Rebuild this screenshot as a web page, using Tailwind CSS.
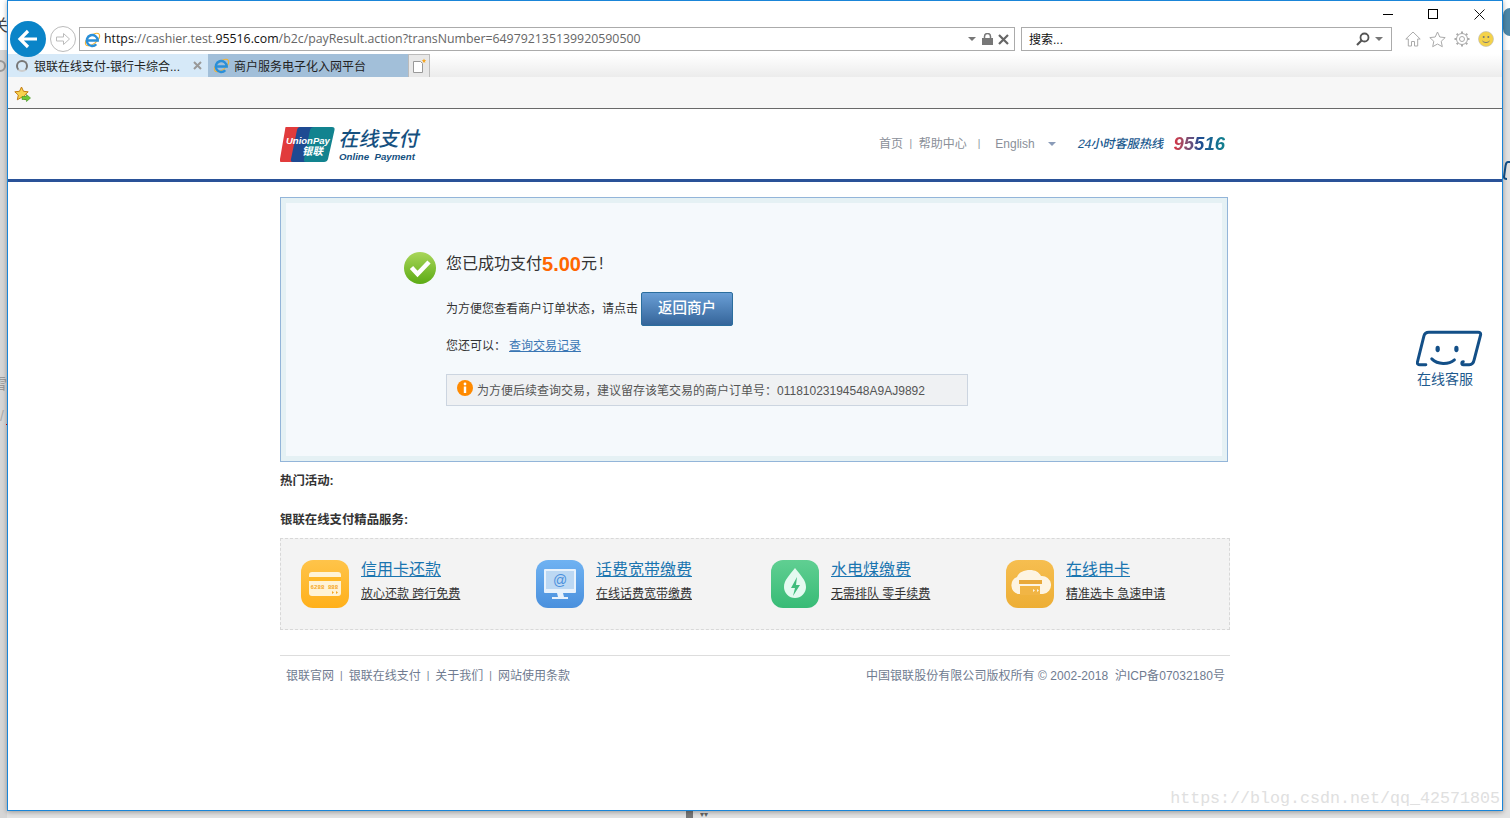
<!DOCTYPE html>
<html lang="zh-CN">
<head>
<meta charset="utf-8">
<title>银联在线支付</title>
<script src="https://cdn.jsdelivr.net/npm/@tailwindcss/browser@4"></script>
</head>
<body class="relative h-[818px] w-[1510px] overflow-hidden bg-[#e2e2e2] font-['Liberation_Sans','Noto_Sans_CJK_SC',sans-serif] text-xs text-[#333]">

<!-- desktop fragments behind the window -->
<div class="absolute left-0 top-0 h-[50px] w-[7px] overflow-hidden bg-white"><span class="absolute left-[-8px] top-[15px] text-[16px] text-[#444]">关</span></div>
<div class="absolute left-0 top-[50px] h-[768px] w-[7px] bg-[#d6d6d6]"></div>
<div class="absolute left-[-6px] top-[60px] size-[12px] rounded-full border-2 border-[#999]"></div>
<div class="absolute left-[-8px] top-[376px] text-[15px] leading-4 text-[#999]">雪</div>
<div class="absolute left-0 top-[408px] text-[14px] leading-4 text-[#aaa]">/</div>
<div class="absolute left-[6px] top-[424px] size-px bg-[#e00000]"></div>
<div class="absolute right-0 top-0 h-[50px] w-[7px] bg-white"></div>
<div class="absolute right-0 top-[8px] h-[28px] w-[7px] rounded-l-full bg-[#4d87a8]"></div>
<svg class="absolute right-0 top-[160px] h-[20px] w-[7px]" viewBox="0 0 7 20" fill="none" stroke="#134f87" stroke-width="2"><path d="M7 2H5C3 2 3 4 2.500 6L1 17c0 1 1 2 3 2"/></svg>
<div class="absolute bottom-0 left-[686px] h-[7px] w-[7px] bg-[#777]"></div>
<div class="absolute bottom-0 left-[700px] h-[6px] w-[15px] overflow-hidden text-[8px] leading-[6px] text-[#666]">▾▾</div>

<!-- browser window -->
<div class="relative ml-[7px] flex h-[811px] w-[1496px] flex-col border border-[#1a85d8] bg-white shadow-[0_1px_5px_rgba(0,0,0,0.35)]">

  <!-- title strip with window buttons -->
  <div class="flex h-[26px] items-center justify-end pr-[17px]">
    <div class="flex items-center">
      <span class="mr-[35px] h-px w-[10px] bg-black"></span>
      <span class="mr-[36px] size-[10px] border border-black"></span>
      <svg class="size-[11px]" viewBox="0 0 11 11" fill="none" stroke="#111" stroke-width="1"><path d="M.5.5l10 10M10.500.5l-10 10"/></svg>
    </div>
  </div>

  <!-- address row -->
  <div class="flex h-[24px] items-stretch pl-[71px]">
    <div class="flex w-[936px] shrink-0 items-center border border-[#ababab] pl-[4px] pr-[5px]">
      <svg class="mr-[3px] size-[17px] shrink-0" viewBox="0 0 18 18" fill="none"><ellipse cx="9" cy="9" rx="9" ry="4.500" transform="rotate(-38 9 9)" stroke="#f2b233" stroke-width="1.200"/><path d="M4 10h10.500A5.800 5.800 0 1 0 13 14" stroke="#2a8fd8" stroke-width="2.600"/></svg>
      <span class="pt-[1px] font-['Open_Sans',sans-serif] text-[12.340px] leading-none text-[#666]"><span class="text-[#111]">https</span>://cashier.test.<span class="text-[#111]">95516.com</span>/b2c/payResult.action?transNumber=649792135139920590500</span>
      <span class="ml-auto mr-[6px] h-0 w-0 border-x-[4px] border-t-[4px] border-x-transparent border-t-[#777]"></span>
      <svg class="mr-[5px] h-[12px] w-[11px]" viewBox="0 0 11 12"><path d="M0 5h11v7H0z" fill="#777"/><path d="M2.500 5.500V3.500a3 3 0 0 1 6 0v2" fill="none" stroke="#777" stroke-width="1.500"/></svg>
      <svg class="size-[11px]" viewBox="0 0 11 11" fill="none" stroke="#666" stroke-width="2.200"><path d="M1 1l9 9M10 1l-9 9"/></svg>
    </div>
    <div class="ml-[6px] flex w-[371px] shrink-0 items-center border border-[#ababab] pl-[7px] pr-[8px]">
      <span class="pt-px text-xs text-[#111]">搜索...</span>
      <svg class="ml-auto mr-[5px] size-[14px]" viewBox="0 0 14 14" fill="none" stroke="#555"><circle cx="8.500" cy="5.500" r="4" stroke-width="1.800"/><path d="M5.500 8.500L1 13" stroke-width="2.200"/></svg>
      <span class="h-0 w-0 border-x-[4px] border-t-[4px] border-x-transparent border-t-[#777]"></span>
    </div>
    <div class="ml-[13px] flex items-center gap-[8px]">
      <svg class="size-[16px]" viewBox="0 0 16 16" fill="#fff" stroke="#aaa"><path d="M8 1L.8 8h2.500v7H6.500v-4.500h3V15h3.200V8h2.500z"/></svg>
      <svg class="size-[17px]" viewBox="0 0 17 17" fill="#fff" stroke="#aaa"><path d="M8.500 1l2.300 5 5.400.6-4 3.700 1.100 5.400-4.800-2.700-4.800 2.700 1.100-5.400-4-3.700 5.400-.6z"/></svg>
      <svg class="size-[16px]" viewBox="0 0 16 16" fill="none" stroke="#aaa"><circle cx="8" cy="8" r="2.500"/><circle cx="8" cy="8" r="5.500"/><path d="M8 .500v2M8 13.500v2M.5 8h2M13.500 8h2M2.700 2.700l1.400 1.400M11.900 11.900l1.400 1.400M13.300 2.700l-1.400 1.400M4.100 11.900l-1.400 1.400" stroke-width="2"/></svg>
      <svg class="size-[16px]" viewBox="0 0 16 16"><circle cx="8" cy="8" r="7.500" fill="#f4d24a" stroke="#bbb" stroke-width=".6"/><circle cx="5.700" cy="6" r="1" fill="#777"/><circle cx="10.300" cy="6" r="1" fill="#777"/><path d="M4.500 10c2 2 5 2 7 0" fill="none" stroke="#777"/></svg>
    </div>
  </div>

  <!-- tab row -->
  <div class="mt-[3px] flex h-[23px] items-stretch bg-gradient-to-b from-white to-[#ececec]">
    <div class="flex w-[200px] items-center bg-[#d6e9f8] pl-[8px] pr-[6px]">
      <span class="mr-[6px] size-[12px] rounded-full border-2 border-[#777] border-b-[#ccc]"></span>
      <span class="pt-[2px] text-xs text-[#222]">银联在线支付-银行卡综合...</span>
      <svg class="ml-auto size-[9px]" viewBox="0 0 9 9" fill="none" stroke="#999" stroke-width="2"><path d="M1 1l7 7M8 1l-7 7"/></svg>
    </div>
    <div class="flex w-[200px] items-center bg-[#a2bfd9] pl-[5px]">
      <svg class="mr-[4px] size-[17px] shrink-0" viewBox="0 0 18 18" fill="none"><ellipse cx="9" cy="9" rx="9" ry="4.500" transform="rotate(-38 9 9)" stroke="#f2b233" stroke-width="1.200"/><path d="M4 10h10.500A5.800 5.800 0 1 0 13 14" stroke="#2a8fd8" stroke-width="2.600"/></svg>
      <span class="pt-[2px] text-xs text-[#222]">商户服务电子化入网平台</span>
    </div>
    <div class="flex w-[22px] items-center justify-center border-x border-t border-[#bbb] bg-[#e8e8e8]">
      <svg class="size-[16px]" viewBox="0 0 16 16"><path d="M2.500 3.500h7l2 2v9h-9z" fill="#fff" stroke="#999"/><path d="M13 .500l.7 1.500 1.500.3-1.200 1 .3 1.600-1.300-.8-1.300.8.300-1.600-1.200-1 1.500-.3z" fill="#f5a623"/></svg>
    </div>
  </div>

  <!-- favorites row -->
  <div class="flex h-[32px] items-center border-b border-[#696969] bg-[#f7f7f7] pl-[6px] pt-[3px]">
    <svg class="size-[17px]" viewBox="0 0 17 17"><path d="M7.500 1l2 4.300 4.700.5-3.500 3.300 1 4.700-4.200-2.400-4.200 2.400 1-4.700L.8 5.800l4.700-.5z" fill="#f7d24e" stroke="#c47d12"/><path d="M8 10.500h4.500V8.500l4 3.500-4 3.500v-2H8z" fill="#6cc936" stroke="#3e8e1f" stroke-width=".6"/></svg>
  </div>

  <!-- page -->
  <div class="flex-1">
    <header class="h-[70px]">
      <div class="mx-auto flex h-[70px] w-[950px] items-start justify-between">
        <div class="mt-[18px] flex">
          <svg class="h-[35px] w-[55px] shrink-0" viewBox="0 0 55 35">
            <path d="M6 0h22c2 0 3 1 2.500 3L24 32c-.5 2-2 3-4 3H2c-2 0-2.500-1-2-3L5 3C5.500 1 5 0 6 0z" fill="#e13b3c"/>
            <path d="M20 0h21c2 0 3 1 2.500 3L37 32c-.5 2-2 3-4 3H13c-2 0-2.500-1-2-3l6-29c.5-2 1.500-3 3-3z" fill="#1e4a92"/>
            <path d="M34 0h18c2 0 3 1 2.500 3L48 32c-.5 2-2 3-4 3H26c-2 0-2.500-1-2-3l6-29c.5-2 2-3 4-3z" fill="#12838f"/>
            <text x="6" y="17" font-family="Liberation Sans" font-size="9.500" font-weight="700" font-style="italic" fill="#fff">UnionPay</text>
            <text x="22" y="28" font-family="Noto Sans CJK SC" font-size="10.500" font-weight="700" font-style="italic" fill="#fff">银联</text>
          </svg>
          <div class="ml-[5px] flex flex-col">
            <span class="-skew-x-12 text-[20px] font-medium leading-[24px] text-[#15507f]">在线支付</span>
            <span class="-ml-[1px] mt-[1px] text-[9.700px] font-bold italic leading-[10px] text-[#15507f]">Online&nbsp; Payment</span>
          </div>
        </div>
        <div class="mr-[5px] mt-[23px] flex h-[24px] items-center text-xs text-[#8a8f99]">
          <span>首页</span><span class="mx-[6.500px] text-[10px]">|</span><span>帮助中心</span><span class="ml-[11px] mr-[8px] text-[10px]">|</span>
          <span class="ml-[7px]">English</span>
          <span class="ml-[13px] h-0 w-0 border-x-[4px] border-t-[4px] border-x-transparent border-t-[#8a9bb8]"></span>
          <span class="ml-[22px] -skew-x-12 text-[12.200px] font-medium tracking-[-0.100px] text-[#1b5a8f]">24小时客服热线</span>
          <span class="ml-[10px] bg-gradient-to-r from-[#d92d40] via-[#1e4a92] to-[#12838f] bg-clip-text text-[18.500px] font-bold italic text-transparent">95516</span>
        </div>
      </div>
    </header>
    <div class="h-[3px] bg-[#2a5298]"></div>

    <main class="mx-auto mt-[15px] w-[950px]">
      <!-- result panel -->
      <section class="h-[265px] w-[948px] border border-[#93b5d9] bg-[#e5f1f4] p-[5px]">
        <div class="flex h-full bg-[#f5f9fc] pl-[118px] pt-[48px]">
          <svg class="mt-[1px] size-[32px] shrink-0" viewBox="0 0 32 32">
            <defs><linearGradient id="g1" x1="0" y1="0" x2="0" y2="1"><stop offset="0" stop-color="#a9d65a"/><stop offset="1" stop-color="#5cab14"/></linearGradient></defs>
            <circle cx="16" cy="16" r="16" fill="url(#g1)"/>
            <path d="M7.500 15.500l6 6.500L25 10" fill="none" stroke="#fff" stroke-width="4.500"/>
          </svg>
          <div class="ml-[10px] flex flex-col items-start">
            <div class="flex h-[24px] items-center pt-[2px] text-base text-[#333]">您已成功支付<span class="text-[20px] font-bold text-[#ff6600]">5.00</span>元<span class="ml-[2px]">!</span></div>
            <div class="mt-[17px] flex items-center">
              <span class="text-xs text-[#333]">为方便您查看商户订单状态&#xFF0C;请点击</span>
              <a class="ml-[3px] flex h-[34px] w-[92px] items-center justify-center rounded-[2px] border border-[#2b6e9e] bg-gradient-to-b from-[#6a9fd6] to-[#35659a] text-[14.500px] font-medium text-white">返回商户</a>
            </div>
            <div class="mt-[10px] flex h-[20px] items-center text-xs text-[#333]">您还可以&#xFF1A;<a class="ml-[3px] text-[#3a76b4] underline">查询交易记录</a></div>
            <div class="mt-[18px] flex h-[32px] w-[522px] items-center border border-[#ccd5e0] bg-[#eff1f3] pl-[10px] pt-[1px] text-xs text-[#555]">
              <svg class="mb-[5px] mr-[4px] size-[16px] shrink-0" viewBox="0 0 16 16"><circle cx="8" cy="8" r="8" fill="#ff8a00"/><circle cx="8" cy="4" r="1.400" fill="#fff"/><path d="M6.800 6.500h2.400v6.500H6.800z" fill="#fff"/></svg>
              为方便后续查询交易&#xFF0C;建议留存该笔交易的商户订单号&#xFF1A;01181023194548A9AJ9892
            </div>
          </div>
        </div>
      </section>

      <h3 class="mt-[11px] h-[16px] text-[12.400px] font-bold leading-4 text-[#333]">热门活动:</h3>
      <h3 class="mt-[23px] h-[16px] text-[12.400px] font-bold leading-4 text-[#333]">银联在线支付精品服务:</h3>

      <!-- services -->
      <section class="mt-[10px] flex h-[92px] items-center border border-dashed border-[#d8d8d8] bg-[#f3f3f3] pl-[20px]">
        <a class="flex w-[235px] shrink-0 items-center">
          <svg class="size-[48px] shrink-0" viewBox="0 0 48 48">
            <defs><linearGradient id="y1" x1="0" y1="0" x2="0" y2="1"><stop offset="0" stop-color="#ffc44a"/><stop offset="1" stop-color="#ffb01a"/></linearGradient></defs>
            <rect width="48" height="48" rx="12" fill="url(#y1)"/>
            <rect x="8" y="12" width="32" height="24" rx="3" fill="#fff3d6"/>
            <rect x="8" y="17" width="32" height="4" fill="#ffb827"/>
            <text x="9.500" y="28.500" font-family="Liberation Mono" font-size="5.800" font-weight="700" fill="#f5a623">6288 888</text>
            <path d="M31 31l2 1.500-2 1.500zM35 31l2 1.500-2 1.500z" fill="#f5a623"/>
          </svg>
          <div class="mb-[6px] ml-[12px]">
            <div class="text-base leading-5 text-[#1a75b0] underline">信用卡还款</div>
            <div class="mt-[6px] text-xs leading-4 text-[#333] underline">放心还款 跨行免费</div>
          </div>
        </a>
        <a class="flex w-[235px] shrink-0 items-center">
          <svg class="size-[48px] shrink-0" viewBox="0 0 48 48">
            <defs><linearGradient id="b1" x1="0" y1="0" x2="0" y2="1"><stop offset="0" stop-color="#6fb2f2"/><stop offset="1" stop-color="#4a90dd"/></linearGradient></defs>
            <rect width="48" height="48" rx="12" fill="url(#b1)"/>
            <rect x="8" y="9" width="32" height="24" rx="1" fill="#e8f2fc"/>
            <rect x="10" y="11" width="28" height="18" fill="#bcd8f3"/>
            <path d="M21 33h6l1 4h-6zM16 37h16v2H16z" fill="#e8f2fc"/>
            <text x="24" y="25" text-anchor="middle" font-family="Liberation Sans" font-size="14" fill="#4a90dd">@</text>
          </svg>
          <div class="mb-[6px] ml-[12px]">
            <div class="text-base leading-5 text-[#1a75b0] underline">话费宽带缴费</div>
            <div class="mt-[6px] text-xs leading-4 text-[#333] underline">在线话费宽带缴费</div>
          </div>
        </a>
        <a class="flex w-[235px] shrink-0 items-center">
          <svg class="size-[48px] shrink-0" viewBox="0 0 48 48">
            <defs><linearGradient id="g2" x1="0" y1="0" x2="0" y2="1"><stop offset="0" stop-color="#60cf92"/><stop offset="1" stop-color="#38bb76"/></linearGradient></defs>
            <rect width="48" height="48" rx="12" fill="url(#g2)"/>
            <path d="M24 8c6 8 11 12 11 19a11 11 0 0 1-22 0c0-7 5-11 11-19z" fill="#e4faf0"/>
            <path d="M26 17l-6 11h4l-2 8 7-11h-4z" fill="#3fbd7b"/>
          </svg>
          <div class="mb-[6px] ml-[12px]">
            <div class="text-base leading-5 text-[#1a75b0] underline">水电煤缴费</div>
            <div class="mt-[6px] text-xs leading-4 text-[#333] underline">无需排队 零手续费</div>
          </div>
        </a>
        <a class="flex w-[225px] shrink-0 items-center">
          <svg class="size-[48px] shrink-0" viewBox="0 0 48 48">
            <defs><linearGradient id="o1" x1="0" y1="0" x2="0" y2="1"><stop offset="0" stop-color="#f6be50"/><stop offset="1" stop-color="#edae35"/></linearGradient></defs>
            <rect width="48" height="48" rx="12" fill="url(#o1)"/>
            <path d="M12 34a9 9 0 0 1-1-17c2-5 7-7 13-7 5 0 9 2 11 6a9 9 0 0 1 2 18z" fill="#fdf4e2"/>
            <path d="M13 20h23v4H13z" fill="#e9a93a"/>
            <path d="M14 26h20v9H14z" fill="#f1b545"/>
            <path d="M27 29l2 1.500-2 1.500zM31 29l2 1.500-2 1.500z" fill="#fdf4e2"/>
          </svg>
          <div class="mb-[6px] ml-[12px]">
            <div class="text-base leading-5 text-[#1a75b0] underline">在线申卡</div>
            <div class="mt-[6px] text-xs leading-4 text-[#333] underline">精准选卡 急速申请</div>
          </div>
        </a>
      </section>

      <!-- footer -->
      <footer class="mt-[25px] flex h-[40px] items-center justify-between border-t border-[#ddd] pl-[6px] pr-[5px] pt-[1px] text-xs text-[#6f7b90]">
        <div class="flex items-center"><span>银联官网</span><span class="mx-[6px] text-[10px]">|</span><span>银联在线支付</span><span class="mx-[6px] text-[10px]">|</span><span>关于我们</span><span class="mx-[6px] text-[10px]">|</span><span>网站使用条款</span></div>
        <div class="tracking-[0.050px]">中国银联股份有限公司版权所有 © 2002-2018&nbsp; 沪ICP备07032180号</div>
      </footer>
    </main>
  </div>

  <!-- floating service widget -->
  <a class="absolute left-[1408px] top-[329px] flex w-[67px] flex-col items-start">
    <svg class="h-[38px] w-[67px] shrink-0" viewBox="0 0 68 38" fill="none" stroke="#134f87" stroke-width="3" stroke-linecap="round">
      <path d="M10 35H4c-2 0-3-1-2.500-3L8 6c.5-2 2-4 5-4h50c2 0 3 1 2.500 3L59 30c-.5 3-2.500 5-5 5h-6c-2 0-2-3 0-3"/>
      <path d="M16 29c6 6 17 6 23 1"/>
      <ellipse cx="22" cy="19" rx="2.200" ry="3.200" fill="#134f87" stroke="none"/>
      <ellipse cx="41" cy="19" rx="2.200" ry="3.200" fill="#134f87" stroke="none"/>
    </svg>
    <span class="ml-[1px] mt-[2px] whitespace-nowrap text-[14px] leading-[18px] text-[#1e5a8e]">在线客服</span>
  </a>

  <!-- watermark -->
  <span class="absolute bottom-[1px] right-[2px] font-['Liberation_Mono',monospace] text-[16.670px] leading-5 text-[#e0e0e0]">https://blog.csdn.net/qq_42571805</span>

  <!-- back / forward buttons over the toolbar -->
  <div class="absolute left-[2px] top-[20px] flex size-[36px] items-center justify-center rounded-full bg-[#0a84c8]">
    <svg class="size-[22px]" viewBox="0 0 22 22" fill="none" stroke="#fff" stroke-width="3.200"><path d="M20 11H3M11 3l-8 8 8 8"/></svg>
  </div>
  <div class="absolute left-[42px] top-[25px] flex size-[26px] items-center justify-center rounded-full border border-[#bbb] bg-white">
    <svg class="size-[16px]" viewBox="0 0 16 16" fill="#fff" stroke="#bbb"><path d="M1.500 6h7V2.500L14.500 8l-6 5.500V10h-7z"/></svg>
  </div>
</div>
</body>
</html>
